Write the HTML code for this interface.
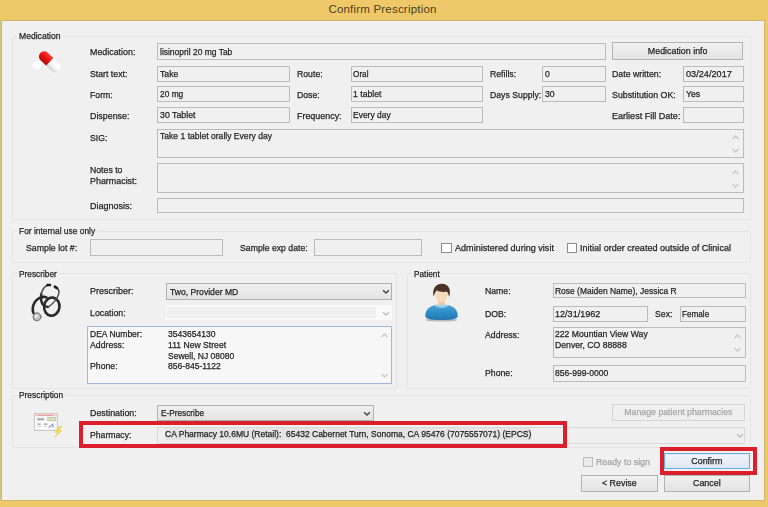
<!DOCTYPE html>
<html><head><meta charset="utf-8"><title>Confirm Prescription</title>
<style>
html,body{margin:0;padding:0}
body{width:768px;height:507px;overflow:hidden;background:#efc869;position:relative;font-family:"Liberation Sans",sans-serif;font-size:9.8px;color:#222;-webkit-text-stroke-width:0.25px}
#title{position:absolute;left:0;top:0;width:765px;height:20px;line-height:18.6px;text-align:center;font-size:11.5px;letter-spacing:.2px;color:#4d4120;-webkit-text-stroke-width:0}
#dlg{position:absolute;left:2px;top:20.7px;width:762.2px;height:479.8px;background:#f0f0f0;box-shadow:0 0 0 1px #cfb56b}
#ls{position:absolute;left:0;top:20px;width:2px;height:481px;background:#dcc679}
#c{position:absolute;left:0;top:0;width:768px;height:507px}
#c>div{position:absolute;box-sizing:border-box;white-space:nowrap}
.l{line-height:12px;height:12px;transform-origin:0 50%}
.gm{background:#f0f0f0}
.g{border:1px solid #e5e5e5;border-radius:2px}
.in{border:1px solid #bbb;background:#f0f0f0}
.combo span{left:3.2px !important}
.in span,.combo span{position:absolute;left:1.8px;top:50%;margin-top:-5.8px;line-height:12px;transform-origin:0 50%}
.in.ta span{top:0.6px;margin-top:0}
.combo{border:1px solid #b0b0b0;background:linear-gradient(#efefef,#e4e4e4)}
.combo.dis{border:2px solid #f9f9f9;border-left-width:1px;background:linear-gradient(to right,#f0f0f0 0,#f0f0f0 calc(100% - 14px),#fafafa calc(100% - 14px))}
.combo.dis2{border-color:#d9d9d9;background:#efefef}
.info{border:1px solid #9db9dc;background:#f7f7f7}
.btn{border:1px solid #b2b2b2;background:linear-gradient(#f1f1f1,#e3e3e3);text-align:center}
.btn b{font-weight:normal;display:block;position:absolute;left:0;right:0;top:50%;margin-top:-6.2px;line-height:12px;transform-origin:50% 50%}
.btn.def{border-color:#6fabe3;box-shadow:inset 0 0 0 1px #d6e8fa;background:linear-gradient(#f0f5fb,#e0e8f1)}
.btn.disb{color:#a6a6a6;border-color:#d4d4d4;background:#efefef}
.cb{border:1px solid #8c8c8c;background:#fdfdfd}
.dcb{border-color:#bcbcbc;background:#e9e9e9}
.red{border:4px solid #db1f2d}
.sa{position:absolute}
</style></head><body>
<div id="title">Confirm Prescription</div>
<div id="ls"></div>
<div id="dlg"></div>
<div id="c">
<div class="g" style="left:12.0px;top:36.0px;width:739.0px;height:184.0px;"></div>
<div class="gm" style="left:17.0px;top:35.0px;width:45.0px;height:3px"></div>
<div class="l" style="left:18.7px;top:30.0px;transform:scaleX(0.876)">Medication</div>
<div class="g" style="left:12.0px;top:230.5px;width:739.0px;height:32.9px;"></div>
<div class="gm" style="left:17.0px;top:229.5px;width:79.7px;height:3px"></div>
<div class="l" style="left:18.7px;top:224.5px;transform:scaleX(0.858)">For internal use only</div>
<div class="g" style="left:12.0px;top:272.9px;width:384.5px;height:116.1px;"></div>
<div class="gm" style="left:17.0px;top:271.9px;width:41.4px;height:3px"></div>
<div class="l" style="left:18.7px;top:267.7px;transform:scaleX(0.848)">Prescriber</div>
<div class="g" style="left:407.0px;top:272.9px;width:344.0px;height:116.1px;"></div>
<div class="gm" style="left:412.0px;top:271.9px;width:29.2px;height:3px"></div>
<div class="l" style="left:413.7px;top:267.7px;transform:scaleX(0.844)">Patient</div>
<div class="g" style="left:12.0px;top:395.0px;width:739.0px;height:53.0px;"></div>
<div class="gm" style="left:17.0px;top:394.0px;width:47.7px;height:3px"></div>
<div class="l" style="left:18.7px;top:389.2px;transform:scaleX(0.854)">Prescription</div>
<div class="l" style="left:89.8px;top:45.8px;transform:scaleX(0.906);">Medication:</div>
<div class="l" style="left:89.8px;top:68.3px;transform:scaleX(0.891);">Start text:</div>
<div class="l" style="left:89.8px;top:88.8px;transform:scaleX(0.888);">Form:</div>
<div class="l" style="left:89.8px;top:109.8px;transform:scaleX(0.905);">Dispense:</div>
<div class="l" style="left:89.8px;top:131.6px;transform:scaleX(0.888);">SIG:</div>
<div class="l" style="left:89.8px;top:164.3px;transform:scaleX(0.888);">Notes to</div>
<div class="l" style="left:89.8px;top:175.3px;transform:scaleX(0.909);">Pharmacist:</div>
<div class="l" style="left:89.8px;top:199.6px;transform:scaleX(0.917);">Diagnosis:</div>
<div class="in" style="left:157.3px;top:43.0px;width:448.7px;height:17.0px;"><span style="transform:scaleX(0.864);">lisinopril 20 mg Tab</span></div>
<div class="in" style="left:157.3px;top:66.0px;width:132.7px;height:16.0px;"><span style="transform:scaleX(0.888);">Take</span></div>
<div class="in" style="left:157.3px;top:86.0px;width:132.7px;height:16.0px;"><span style="transform:scaleX(0.855);">20 mg</span></div>
<div class="in" style="left:157.3px;top:107.0px;width:132.7px;height:16.0px;"><span style="transform:scaleX(0.898);">30 Tablet</span></div>
<div class="in" style="left:350.5px;top:66.0px;width:132.8px;height:16.0px;"><span style="transform:scaleX(0.838);">Oral</span></div>
<div class="in" style="left:350.5px;top:86.0px;width:132.8px;height:16.0px;"><span style="transform:scaleX(0.888);">1 tablet</span></div>
<div class="in" style="left:350.5px;top:107.0px;width:132.8px;height:16.0px;"><span style="transform:scaleX(0.864);">Every day</span></div>
<div class="l" style="left:296.7px;top:68.3px;transform:scaleX(0.888);">Route:</div>
<div class="l" style="left:296.7px;top:88.8px;transform:scaleX(0.888);">Dose:</div>
<div class="l" style="left:296.7px;top:109.8px;transform:scaleX(0.910);">Frequency:</div>
<div class="l" style="left:490.0px;top:68.3px;transform:scaleX(0.888);">Refills:</div>
<div class="l" style="left:490.0px;top:88.8px;transform:scaleX(0.888);">Days Supply:</div>
<div class="in" style="left:542.0px;top:66.0px;width:64.0px;height:16.0px;"><span style="transform:scaleX(0.888);">0</span></div>
<div class="in" style="left:542.0px;top:86.0px;width:64.0px;height:16.0px;"><span style="transform:scaleX(0.888);">30</span></div>
<div class="l" style="left:612.0px;top:68.3px;transform:scaleX(0.894);">Date written:</div>
<div class="l" style="left:612.0px;top:88.8px;transform:scaleX(0.900);">Substitution OK:</div>
<div class="l" style="left:612.0px;top:109.8px;transform:scaleX(0.924);">Earliest Fill Date:</div>
<div class="in" style="left:683.0px;top:66.0px;width:60.7px;height:16.0px;"><span style="transform:scaleX(0.936);">03/24/2017</span></div>
<div class="in" style="left:683.0px;top:86.0px;width:60.7px;height:16.0px;"><span style="transform:scaleX(0.888);">Yes</span></div>
<div class="in" style="left:683.0px;top:107.0px;width:60.7px;height:16.0px;"></div>
<div class="btn" style="left:612.0px;top:42.4px;width:131.3px;height:17.2px;"><b style="transform:scaleX(0.905)">Medication info</b></div>
<div class="in ta" style="left:157.3px;top:128.6px;width:586.4px;height:29.4px;"><span style="transform:scaleX(0.875);">Take 1 tablet orally Every day</span></div>
<svg class="sa" style="left:732px;top:134.5px" width="7" height="5" viewBox="0 0 7 5"><path d="M0.5 4.2 L3.5 1 L6.5 4.2" fill="none" stroke="#c6c6c6" stroke-width="1.2"/></svg>
<svg class="sa" style="left:732px;top:147.5px" width="7" height="5" viewBox="0 0 7 5"><path d="M0.5 0.8 L3.5 4 L6.5 0.8" fill="none" stroke="#c6c6c6" stroke-width="1.2"/></svg>
<div class="in ta" style="left:157.3px;top:163.3px;width:586.4px;height:29.4px;"></div>
<svg class="sa" style="left:732px;top:169.5px" width="7" height="5" viewBox="0 0 7 5"><path d="M0.5 4.2 L3.5 1 L6.5 4.2" fill="none" stroke="#c6c6c6" stroke-width="1.2"/></svg>
<svg class="sa" style="left:732px;top:182.5px" width="7" height="5" viewBox="0 0 7 5"><path d="M0.5 0.8 L3.5 4 L6.5 0.8" fill="none" stroke="#c6c6c6" stroke-width="1.2"/></svg>
<div class="in" style="left:157.3px;top:198.3px;width:586.4px;height:15.2px;"></div>
<div class="l" style="left:26.0px;top:241.6px;transform:scaleX(0.895);">Sample lot #:</div>
<div class="in" style="left:90.0px;top:239.3px;width:132.7px;height:16.4px;"></div>
<div class="l" style="left:240.0px;top:241.6px;transform:scaleX(0.888);">Sample exp date:</div>
<div class="in" style="left:314.3px;top:239.3px;width:107.4px;height:16.4px;"></div>
<div class="cb" style="left:441.2px;top:242.5px;width:10.8px;height:10.3px;"></div>
<div class="l" style="left:455.3px;top:241.6px;transform:scaleX(0.927);">Administered during visit</div>
<div class="cb" style="left:567.0px;top:242.5px;width:10.3px;height:10.3px;"></div>
<div class="l" style="left:580.3px;top:241.6px;transform:scaleX(0.924);">Initial order created outside of Clinical</div>
<div class="l" style="left:89.8px;top:285.0px;transform:scaleX(0.919);">Prescriber:</div>
<div class="combo" style="left:165.7px;top:283.0px;width:226.8px;height:17.0px;"><span style="transform:scaleX(0.877);">Two, Provider MD</span></div>
<div class="l" style="left:89.8px;top:307.0px;transform:scaleX(0.895);">Location:</div>
<div class="combo dis" style="left:165.7px;top:305.0px;width:226.3px;height:15.3px;"></div>
<div class="info" style="left:87.0px;top:326.0px;width:305.3px;height:58.4px;"></div>
<div class="l" style="left:90.4px;top:328.3px;transform:scaleX(0.869);">DEA Number:</div>
<div class="l" style="left:90.4px;top:339.0px;transform:scaleX(0.888);">Address:</div>
<div class="l" style="left:90.4px;top:360.0px;transform:scaleX(0.888);">Phone:</div>
<div class="l" style="left:167.8px;top:328.3px;transform:scaleX(0.873);">3543654130</div>
<div class="l" style="left:167.8px;top:339.0px;transform:scaleX(0.879);">111 New Street</div>
<div class="l" style="left:167.8px;top:349.5px;transform:scaleX(0.868);">Sewell, NJ 08080</div>
<div class="l" style="left:167.8px;top:360.0px;transform:scaleX(0.874);">856-845-1122</div>
<svg class="sa" style="left:381.5px;top:289px" width="8" height="6" viewBox="0 0 8 6"><path d="M1.1 1.2 L4 4.1 L6.9 1.2" fill="none" stroke="#444" stroke-width="1.4"/></svg>
<svg class="sa" style="left:381.5px;top:310.5px" width="8" height="6" viewBox="0 0 8 6"><path d="M1.1 1.2 L4 4.1 L6.9 1.2" fill="none" stroke="#bdbdbd" stroke-width="1.4"/></svg>
<svg class="sa" style="left:380.5px;top:333px" width="7" height="5" viewBox="0 0 7 5"><path d="M0.5 4.2 L3.5 1 L6.5 4.2" fill="none" stroke="#c6c6c6" stroke-width="1.2"/></svg>
<svg class="sa" style="left:380.5px;top:373px" width="7" height="5" viewBox="0 0 7 5"><path d="M0.5 0.8 L3.5 4 L6.5 0.8" fill="none" stroke="#c6c6c6" stroke-width="1.2"/></svg>
<div class="l" style="left:485.3px;top:285.0px;transform:scaleX(0.888);">Name:</div>
<div class="l" style="left:485.3px;top:308.0px;transform:scaleX(0.888);">DOB:</div>
<div class="l" style="left:485.3px;top:328.8px;transform:scaleX(0.888);">Address:</div>
<div class="l" style="left:485.3px;top:366.6px;transform:scaleX(0.888);">Phone:</div>
<div class="in" style="left:552.7px;top:283.3px;width:193.3px;height:15.2px;"><span style="transform:scaleX(0.863);">Rose (Maiden Name), Jessica R</span></div>
<div class="in" style="left:552.7px;top:306.0px;width:95.3px;height:15.7px;"><span style="transform:scaleX(0.925);">12/31/1962</span></div>
<div class="l" style="left:654.7px;top:308.0px;transform:scaleX(0.888);">Sex:</div>
<div class="in" style="left:679.7px;top:306.0px;width:66.3px;height:15.7px;"><span style="transform:scaleX(0.832);">Female</span></div>
<div class="in ta" style="left:552.7px;top:326.6px;width:193.3px;height:31.4px;"><span style="transform:scaleX(0.882);">222 Mountian View Way</span><span style="transform:scaleX(0.884);top:11.6px">Denver, CO 88888</span></div>
<svg class="sa" style="left:734px;top:333.5px" width="7" height="5" viewBox="0 0 7 5"><path d="M0.5 4.2 L3.5 1 L6.5 4.2" fill="none" stroke="#c6c6c6" stroke-width="1.2"/></svg>
<svg class="sa" style="left:734px;top:347px" width="7" height="5" viewBox="0 0 7 5"><path d="M0.5 0.8 L3.5 4 L6.5 0.8" fill="none" stroke="#c6c6c6" stroke-width="1.2"/></svg>
<div class="in" style="left:552.7px;top:365.0px;width:193.3px;height:16.6px;"><span style="margin-top:-6.8px;transform:scaleX(0.875);">856-999-0000</span></div>
<div class="l" style="left:89.6px;top:407.3px;transform:scaleX(0.902);">Destination:</div>
<div class="combo" style="left:157.0px;top:405.0px;width:217.0px;height:16.4px;"><span style="transform:scaleX(0.843);">E-Prescribe</span></div>
<svg class="sa" style="left:363px;top:411px" width="8" height="6" viewBox="0 0 8 6"><path d="M1.1 1.2 L4 4.1 L6.9 1.2" fill="none" stroke="#444" stroke-width="1.4"/></svg>
<div class="l" style="left:89.6px;top:429.3px;transform:scaleX(0.885);">Pharmacy:</div>
<div class="combo dis2" style="left:157.0px;top:427.0px;width:588.0px;height:17.0px;"><span style="transform:scaleX(0.868);left:7.2px !important;margin-top:-7.1px;background:#e4e4e4">CA Pharmacy 10.6MU (Retail):&nbsp; 65432 Cabernet Turn, Sonoma, CA 95476 (7075557071) (EPCS)</span></div>
<svg class="sa" style="left:735.5px;top:432.5px" width="8" height="6" viewBox="0 0 8 6"><path d="M1.1 1.2 L4 4.1 L6.9 1.2" fill="none" stroke="#bdbdbd" stroke-width="1.4"/></svg>
<div class="btn disb" style="left:612.3px;top:404.0px;width:132.7px;height:17.0px;"><b style="transform:scaleX(0.894)">Manage patient pharmacies</b></div>
<div class="cb dcb" style="left:582.8px;top:456.8px;width:9.8px;height:10.2px;"></div>
<div class="l" style="left:596.0px;top:455.6px;transform:scaleX(0.900);color:#a3a3a3">Ready to sign</div>
<div class="btn def" style="left:664.3px;top:452.8px;width:85.7px;height:16.6px;"><b style="transform:scaleX(0.908)">Confirm</b></div>
<div class="btn" style="left:581.0px;top:475.0px;width:76.7px;height:16.5px;"><b style="transform:scaleX(0.906)">&lt; Revise</b></div>
<div class="btn" style="left:664.3px;top:475.0px;width:85.7px;height:16.5px;"><b style="transform:scaleX(0.910)">Cancel</b></div>
<div class="red" style="left:78.9px;top:420.8px;width:488.3px;height:26.9px;"></div>
<div class="red" style="left:659.7px;top:446.6px;width:97.2px;height:28.1px;"></div>
<svg class="sa" style="left:24px;top:44px" width="48" height="36" viewBox="0 0 48 36">
<defs>
<linearGradient id="pr" x1="0" y1="0" x2="0" y2="1"><stop offset="0" stop-color="#ff3b30"/><stop offset=".55" stop-color="#e8100c"/><stop offset="1" stop-color="#a80808"/></linearGradient>
<linearGradient id="pw" x1="0" y1="0" x2="0" y2="1"><stop offset="0" stop-color="#ffffff"/><stop offset=".6" stop-color="#f6f6f6"/><stop offset="1" stop-color="#cfcfcf"/></linearGradient>
<radialGradient id="pp" cx=".45" cy=".4" r=".6"><stop offset="0" stop-color="#ffffff"/><stop offset=".7" stop-color="#f8f8f8"/><stop offset="1" stop-color="#e2e2e2"/></radialGradient>
<filter id="bl" x="-20%" y="-20%" width="140%" height="140%"><feGaussianBlur stdDeviation=".7"/></filter>
</defs>
<g filter="url(#bl)">
<ellipse cx="13.4" cy="22.3" rx="5.4" ry="5.3" fill="url(#pp)"/>
<g transform="rotate(43 25.5 17.5)">
<path d="M18.2 12.3 H26 V22.7 H18.2 A5.2 5.2 0 0 1 18.2 12.3Z" fill="url(#pr)"/>
<path d="M26 12.3 H34 A5.2 5.2 0 0 1 34 22.7 H26Z" fill="url(#pw)"/>
</g>
</g>
</svg>
<svg class="sa" style="left:22px;top:278px" width="48" height="48" viewBox="0 0 48 48">
<defs><filter id="bl2" x="-20%" y="-20%" width="140%" height="140%"><feGaussianBlur stdDeviation=".4"/></filter></defs>
<g fill="none" stroke-linecap="round" filter="url(#bl2)">
<path d="M24.5 19.4 C19 17.4 11.6 22 10.8 30 C10.4 34 11.8 36.6 14.2 38.2" stroke="#2a2a2a" stroke-width="2.6"/>
<ellipse cx="29.8" cy="28.6" rx="7.7" ry="9.1" stroke="#2a2a2a" stroke-width="2.6" transform="rotate(8 29.8 28.6)"/>
<path d="M19.3 16 C18.8 20.5 19.2 24.4 20.8 26.6 C22.2 28.4 24 29 25.8 29" stroke="#2a2a2a" stroke-width="2.5"/>
<path d="M26.6 6.9 C23.5 7.6 21.4 10 20.2 13 C19.7 14.2 19.4 15.2 19.3 16.5" stroke="#4a4a4a" stroke-width="1.5"/>
<path d="M34.2 9.5 C36.8 11 37.6 13.2 36.6 16.4 C35.3 20.4 32.5 24.6 26.4 29" stroke="#4a4a4a" stroke-width="1.5"/>
<path d="M25.4 6.9 L28 6.9" stroke="#1d1d1d" stroke-width="2.5"/>
<path d="M32.8 8.6 L35 10.1" stroke="#1d1d1d" stroke-width="2.5"/>
<circle cx="15" cy="38.8" r="4" fill="#bdbdbd" stroke="#6a6a6a" stroke-width="1"/>
<circle cx="14.4" cy="38.2" r="1.8" fill="#e6e6e6" stroke="none"/>
</g>
</svg>
<svg class="sa" style="left:417px;top:278px" width="48" height="48" viewBox="0 0 48 48">
<defs>
<linearGradient id="bd" x1="0" y1="0" x2="0" y2="1"><stop offset="0" stop-color="#4aa3d6"/><stop offset=".5" stop-color="#2e8ec6"/><stop offset="1" stop-color="#2377ad"/></linearGradient>
<filter id="bl3" x="-20%" y="-20%" width="140%" height="140%"><feGaussianBlur stdDeviation=".45"/></filter>
</defs>
<g filter="url(#bl3)">
<ellipse cx="24.5" cy="42" rx="16" ry="1.6" fill="#b9b9b9"/>
<path d="M8.3 38 C8 32 13 27.2 20 27 L29 27 C36 27.2 41 32 40.7 38 C40.5 40.8 36 42 24.5 42 C13 42 8.5 40.8 8.3 38Z" fill="url(#bd)"/>
<path d="M17.5 27.4 C20 30.6 29 30.6 31.5 27.4 C29 26 20 26 17.5 27.4Z" fill="#93d0ef"/>
<rect x="21.2" y="21" width="6.6" height="6.4" rx="2" fill="#ecc9a6"/>
<ellipse cx="24.5" cy="16.8" rx="6.1" ry="7.4" fill="#f4d9bb"/>
<path d="M16.4 18.5 C15 9.5 20 5.6 25 5.8 C31 6 34.4 10.5 32.3 19 C31.6 16.5 30.8 14.8 29.8 13.6 C26.5 14.4 21.5 13.6 19.8 12.2 C18.6 13.8 17.6 15.5 16.4 18.5Z" fill="#4b3126"/>
</g>
</svg>
<svg class="sa" style="left:26px;top:406px" width="44" height="38" viewBox="0 0 44 38">
<defs><filter id="bl4" x="-20%" y="-20%" width="140%" height="140%"><feGaussianBlur stdDeviation=".4"/></filter></defs>
<g filter="url(#bl4)">
<rect x="8.3" y="7.3" width="23" height="17" fill="#fafafa" stroke="#b9b9b9" stroke-width=".8"/>
<rect x="8.8" y="7.6" width="22" height="2.6" fill="#f3cfcf"/>
<path d="M12 9.4 H27" stroke="#d98585" stroke-width=".7"/>
<rect x="11.2" y="12.2" width="7" height="2.2" fill="#a9a9b0"/>
<rect x="21.8" y="11.6" width="8" height="3.2" fill="#e3ecd2" stroke="#a9b78e" stroke-width=".7"/>
<path d="M24.4 11.6 V14.8 M27.1 11.6 V14.8" stroke="#a9b78e" stroke-width=".6"/>
<path d="M11.4 18.2 H14.6 M18 18.2 H21.4" stroke="#9a9aa2" stroke-width="1.2"/>
<path d="M11.4 20.4 H15 M18 20.4 H21" stroke="#c4c4c8" stroke-width=".7"/>
<path d="M22.6 21.4 C24.5 20.8 25.6 19 26.8 17.8 C26.4 19.8 25.6 21 28 20.6" fill="none" stroke="#6c7fc4" stroke-width="1"/>
<path d="M33.6 20.2 L29 26.6 L32 26.8 L28.6 31.4 L35.6 24.8 L32.6 24.4 L35.8 20.6Z" fill="#f5dc4a" stroke="#e3c63a" stroke-width=".5"/>
</g>
</svg>

</div>
</body></html>
